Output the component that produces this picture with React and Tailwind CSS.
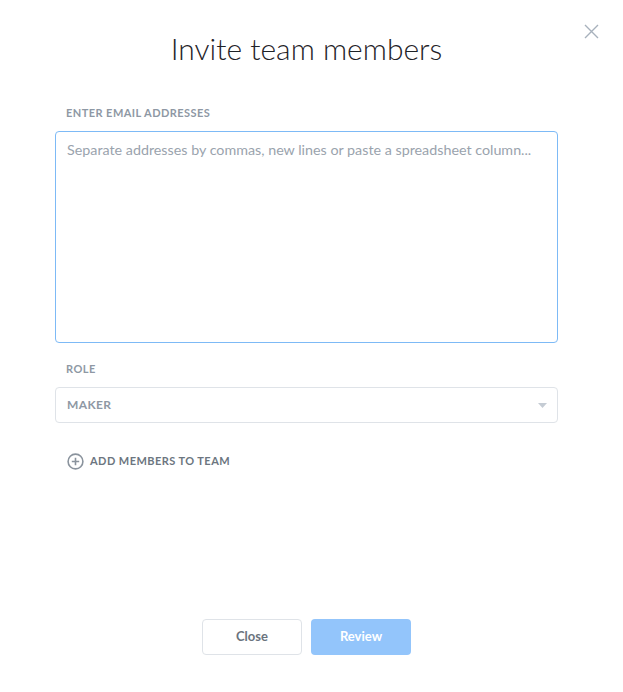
export default function App() {
  return (
    <div className="relative min-h-[692px] w-full bg-white font-['Lato',sans-serif] text-[#2d3239]">
      {/* Close */}
      <button className="absolute right-[24px] top-[24px]">
        <svg width="15" height="15" viewBox="0 0 15 15" fill="none" stroke="#a7b1bc" strokeWidth="1.4">
          <path d="M1 1l13 13M14 1L1 14" />
        </svg>
      </button>

      <div className="flex min-h-[692px] flex-col pl-[55px] pr-[65px] pb-[37px]">
        <h1 className="mt-[31px] text-center text-[30px] font-light leading-[34px] text-[#1f2328]">
          Invite team members
        </h1>

        {/* Emails */}
        <label className="mt-[41px] pl-[11px] text-[11px] font-bold uppercase leading-[14px] tracking-[0.04em] text-[#8e98a4]">
          Enter email addresses
        </label>
        <textarea
          className="mt-[11px] h-[212px] w-full resize-none rounded-[4px] border border-[#7dbaf6] px-[11px] py-[9px] text-[14.3px] leading-[18px] text-[#2d3239] outline-none placeholder:text-[#9aa3ad]"
          placeholder="Separate addresses by commas, new lines or paste a spreadsheet column..."
        />

        {/* Role */}
        <label className="mt-[19px] pl-[11px] text-[11px] font-bold uppercase leading-[14px] tracking-[0.04em] text-[#8e98a4]">
          Role
        </label>
        <div className="mt-[11px] flex h-[36px] items-center justify-between rounded-[4px] border border-[#dfe3e8] pl-[11px] pr-[10px]">
          <span className="text-[12px] font-bold uppercase tracking-[0.03em] text-[#8e98a4]">Maker</span>
          <svg width="9" height="5" viewBox="0 0 9 5">
            <path d="M0 0h9L4.5 5z" fill="#c5ccd4" />
          </svg>
        </div>

        {/* Add members */}
        <button className="mt-[30px] flex items-center gap-[6px] self-start pl-[12px] text-[11px] font-bold uppercase tracking-[0.04em] text-[#6c7680]">
          <svg width="17" height="17" viewBox="0 0 17 17" fill="none" stroke="#8a939d" strokeWidth="1.6">
            <circle cx="8.5" cy="8.5" r="7.4" />
            <path d="M8.5 4.8v7.4M4.8 8.5h7.4" />
          </svg>
          Add members to team
        </button>

        <div className="flex-1" />

        {/* Footer */}
        <div className="flex justify-center gap-[9px]">
          <button className="h-[36px] w-[100px] rounded-[4px] border border-[#dfe3e8] bg-white text-[13px] font-bold text-[#6b747e]">
            Close
          </button>
          <button className="h-[36px] w-[100px] rounded-[4px] bg-[#93c5fb] text-[13px] font-bold text-white">
            Review
          </button>
        </div>
      </div>
    </div>
  )
}
